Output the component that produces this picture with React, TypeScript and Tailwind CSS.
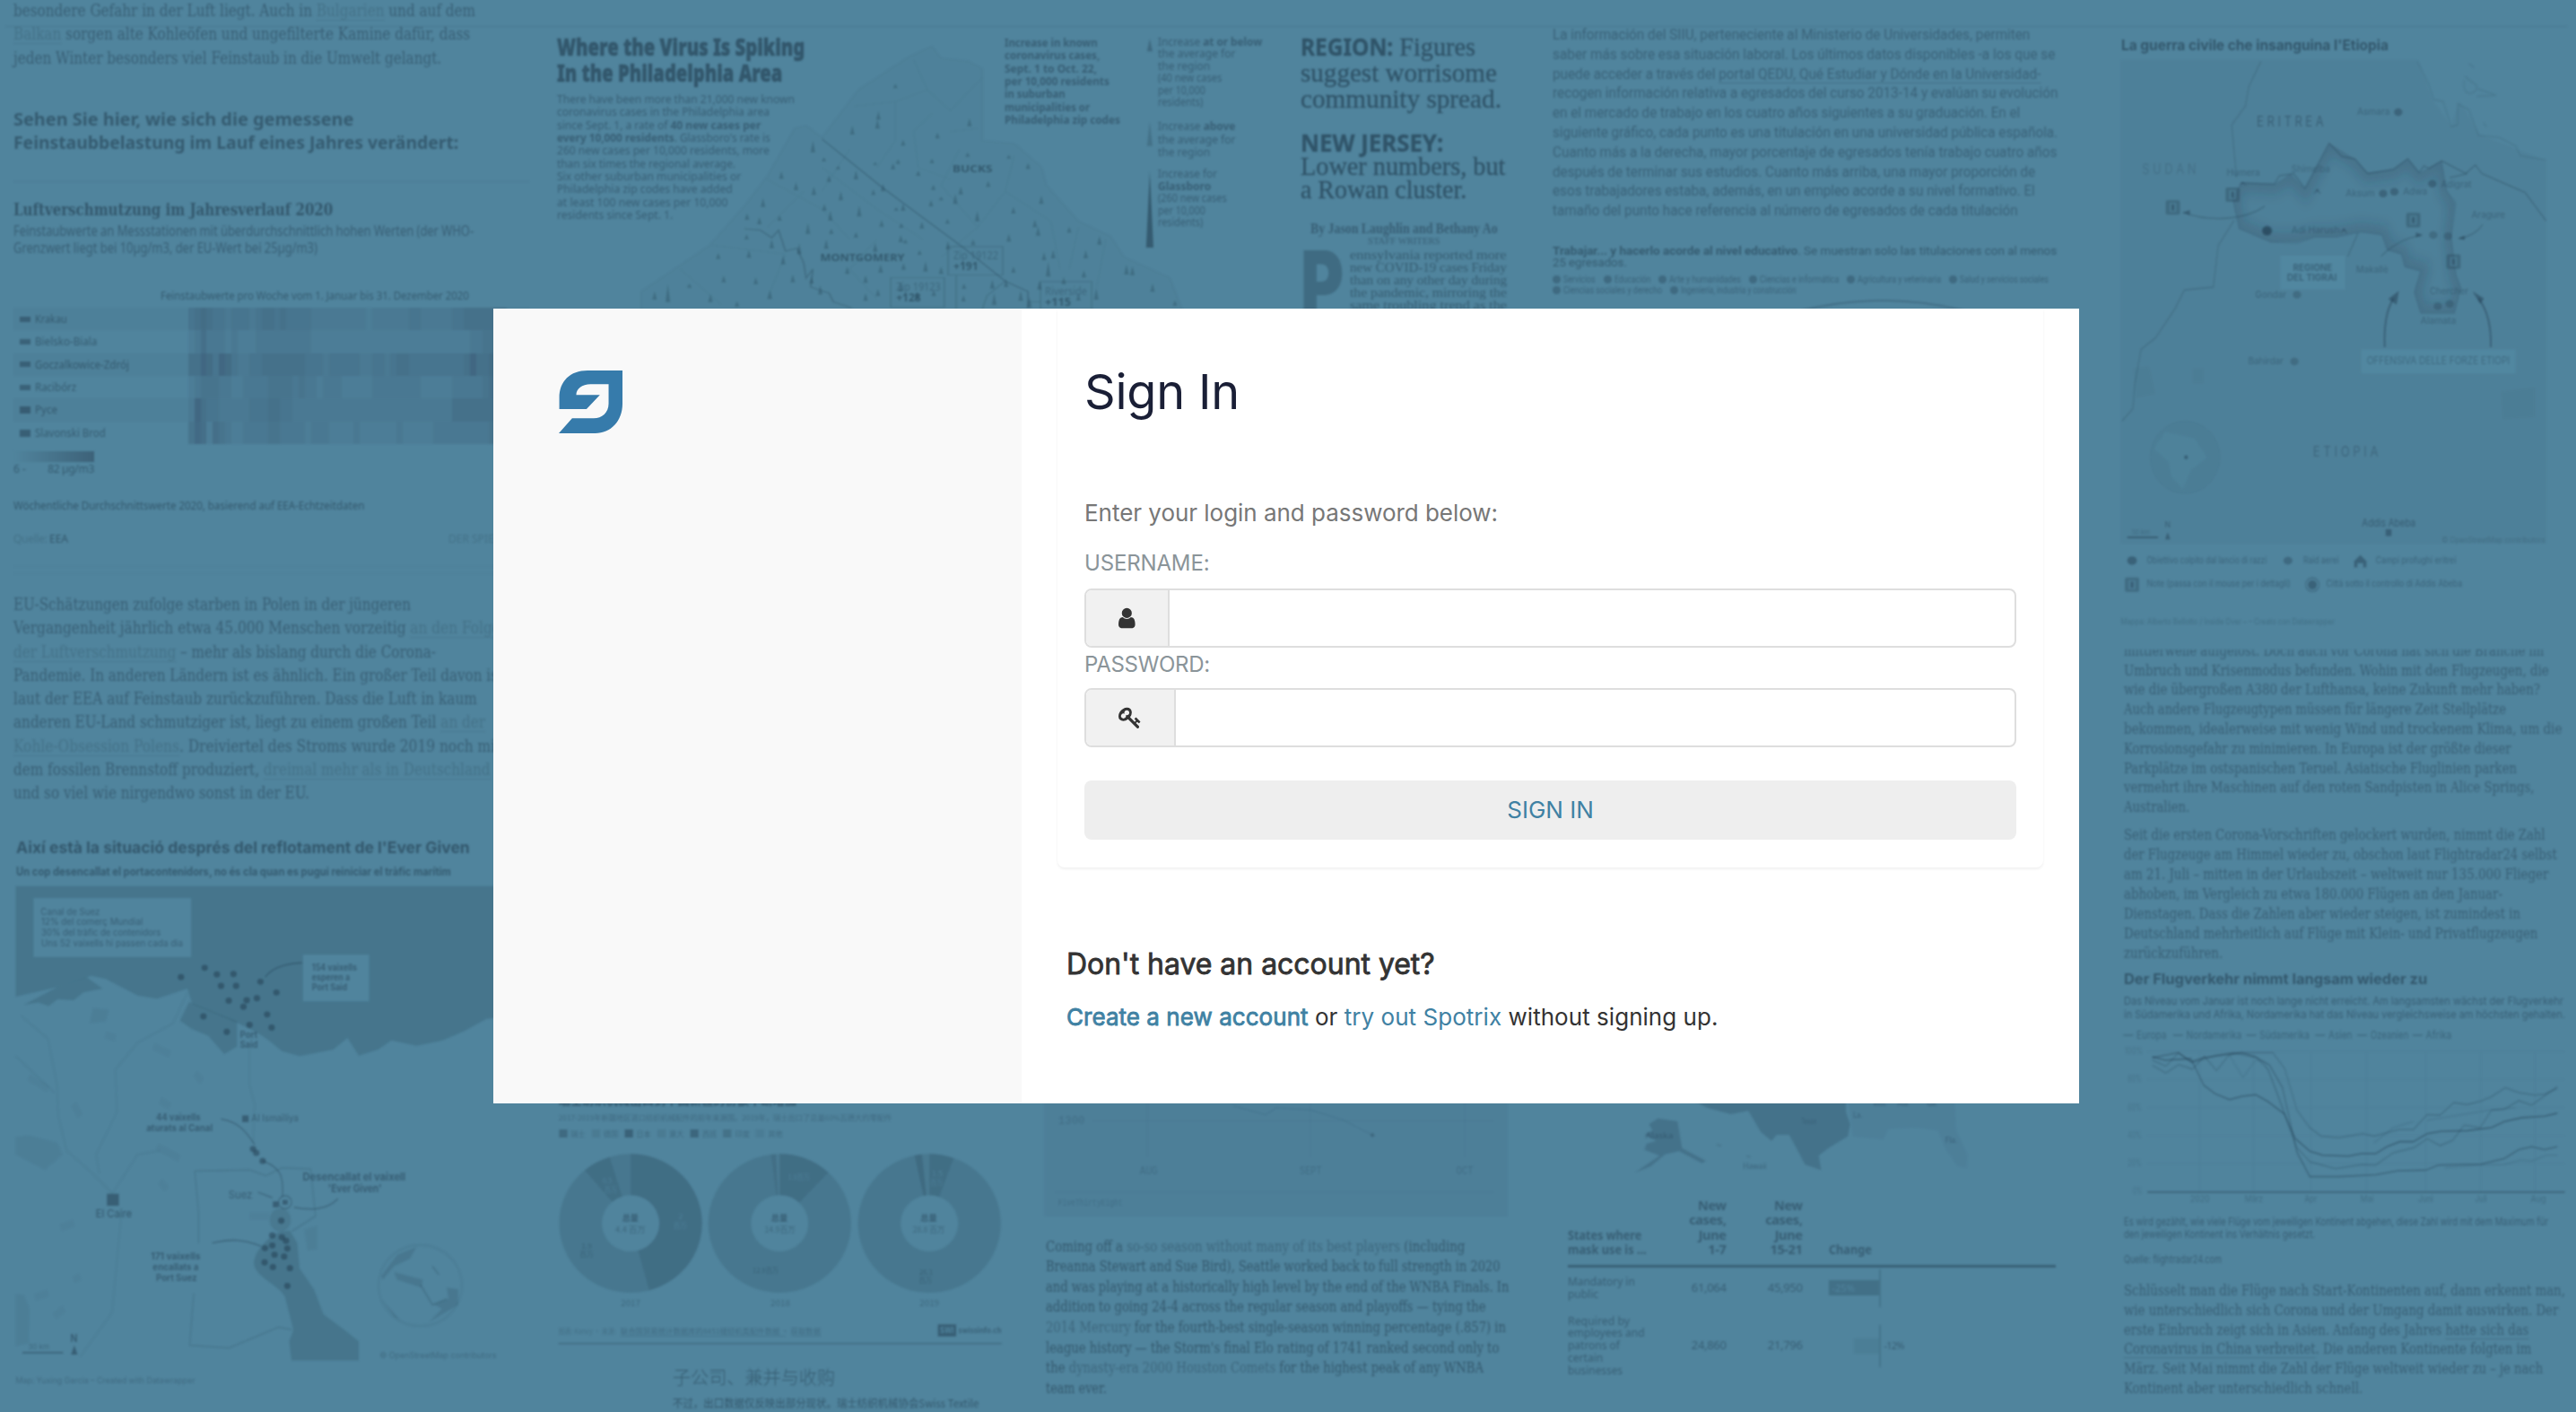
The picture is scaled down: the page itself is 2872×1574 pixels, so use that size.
import { useLayoutEffect, useRef, useState } from "react";
import type { ReactNode } from "react";

/* ---------- text helpers ---------- */

type Row = [number, ReactNode];

/** One line of print, condensed or expanded to a given measure. */
function Line({ w, children }: { w: number; children: ReactNode }) {
  const ref = useRef<HTMLDivElement>(null);
  const [scale, setScale] = useState(1);
  useLayoutEffect(() => {
    if (ref.current) setScale(w / ref.current.offsetWidth);
  }, [w]);
  return (
    <div ref={ref} className="w-max origin-left whitespace-nowrap" style={{ transform: `scaleX(${scale})` }}>
      {children}
    </div>
  );
}

function Lines({ rows, className }: { rows: Row[]; className: string }) {
  return (
    <div className={className}>
      {rows.map(([w, text], i) => (
        <Line key={i} w={w}>
          {text}
        </Line>
      ))}
    </div>
  );
}

const A = ({ children }: { children: ReactNode }) => (
  <span className="text-[#1f3a4d]/25 underline decoration-[#1f3a4d]/15 decoration-1 underline-offset-4">{children}</span>
);

/** Label inside a drawing, fitted to a length. */
function T({ x, y, w, s, b, o = 0.4, children }: { x: number; y: number; w: number; s: number; b?: boolean; o?: number; children: string }) {
  return (
    <text x={x} y={y} fontSize={s * 1.12} textLength={w} lengthAdjust="spacingAndGlyphs" fontWeight={b ? 700 : 400} fill="#1f3a4d" fillOpacity={o * 1.25} stroke="none">
      {children}
    </text>
  );
}

/* ---------- left column ---------- */

const cities: [string, number][] = [
  ["Krakau", 36],
  ["Bielsko-Biala", 69],
  ["Goczalkowice-Zdrój", 105],
  ["Racibórz", 46],
  ["Pyce", 25],
  ["Slavonski Brod", 79],
];

const heat = [
  "3454332333234434333322222222212222223322222334444444",
  "2353332322233333333322222222222222222222222222334465",
  "4465365322334444444333233333223323443333333334644555",
  "2344433223333444434332333222223333333322222333334566",
  "2643322222333443322222222222222222222222222444444432",
  "4652543223333443333233322223222222322222333333333433",
];

function LeftColumn() {
  return (
    <div className="flex h-full w-[590px] shrink-0 flex-col pl-[15px]">
      <Lines
        className="-mt-px font-['DejaVu_Serif',serif] text-[18px] leading-[26.3px] text-[#1f3a4d]/50"
        rows={[
          [515, <>besondere Gefahr in der Luft liegt. Auch in <A>Bulgarien</A> und auf dem</>],
          [509, <><A>Balkan</A> sorgen alte Kohleöfen und ungefilterte Kamine dafür, dass</>],
          [477, "jeden Winter besonders viel Feinstaub in die Umwelt gelangt."],
        ]}
      />
      <Lines
        className="mt-[42px] font-['Noto_Sans',sans-serif] text-[20px] leading-[26px] font-bold text-[#1f3a4d]/55"
        rows={[
          [379, "Sehen Sie hier, wie sich die gemessene"],
          [496, "Feinstaubbelastung im Lauf eines Jahres verändert:"],
        ]}
      />
      <div className="mt-[30px] h-px bg-[#1f3a4d]/10" />
      <Lines
        className="mt-[18px] font-['DejaVu_Serif',serif] text-[19px] leading-6 font-bold text-[#1f3a4d]/60"
        rows={[[356, "Luftverschmutzung im Jahresverlauf 2020"]]}
      />
      <Lines
        className="mt-[3px] font-['Noto_Sans',sans-serif] text-[15.5px] leading-[19px] text-[#1f3a4d]/50"
        rows={[
          [513, "Feinstaubwerte an Messstationen mit überdurchschnittlich hohen Werten (der WHO-"],
          [339, "Grenzwert liegt bei 10µg/m3, der EU-Wert bei 25µg/m3)"],
        ]}
      />
      <Lines
        className="mt-9 ml-[164px] font-['Noto_Sans',sans-serif] text-[12.5px] leading-4 text-[#1f3a4d]/55"
        rows={[[344, "Feinstaubwerte pro Woche vom 1. Januar bis 31. Dezember 2020"]]}
      />
      <div className="mt-[5px] flex flex-col font-['Noto_Sans',sans-serif] text-[13px] leading-[25.4px] text-[#1f3a4d]/55">
        {cities.map(([name, w], r) => (
          <div key={name} className={r % 2 ? "flex h-[25.4px] items-center" : "flex h-[25.4px] items-center bg-[#1f3a4d]/5"}>
            <div className={r > 3 ? "ml-[7px] h-[8px] w-3 shrink-0 bg-[#1f3a4d]/50" : "ml-[7px] h-[6px] w-3 shrink-0 bg-[#1f3a4d]/45"} />
            <div className="ml-[5px] w-[171px] shrink-0">
              <Line w={w}>{name}</Line>
            </div>
            <div className="flex h-full w-[355px]">
              {heat[r].split("").map((c, i) => (
                <div key={i} className="h-full flex-1 bg-[#2c3f5c]" style={{ opacity: (Number(c) - 0.6) * 0.068 }} />
              ))}
            </div>
          </div>
        ))}
      </div>
      <div className="mt-2 h-3 w-[90px] bg-linear-to-r from-[#50849d] to-[#3d6279]" />
      <div className="flex w-[90px] justify-between font-['Noto_Sans',sans-serif] text-[12px] leading-4 text-[#1f3a4d]/55">
        <span>6 -</span>
        <span className="tracking-tight">82 µg/m3</span>
      </div>
      <Lines
        className="mt-6 font-['Noto_Sans',sans-serif] text-[13px] leading-4 text-[#1f3a4d]/60"
        rows={[[391, "Wöchentliche Durchschnittswerte 2020, basierend auf EEA-Echtzeitdaten"]]}
      />
      <div className="mt-[22px] flex font-['Noto_Sans',sans-serif] text-[12px] leading-4 text-[#1f3a4d]/25">
        <span className="w-10 tracking-tight">Quelle:</span>
        <span className="text-[#1f3a4d]/60">EEA</span>
        <span className="ml-[424px] whitespace-nowrap">DER SPIEGEL</span>
      </div>
      <div className="mt-[22px] h-[9px] border-y border-[#1f3a4d]/5" />
      <Lines
        className="mt-[21px] h-[236px] shrink-0 font-['DejaVu_Serif',serif] text-[18px] leading-[26.25px] text-[#1f3a4d]/50"
        rows={[
          [443, "EU-Schätzungen zufolge starben in Polen in der jüngeren"],
          [553, <>Vergangenheit jährlich etwa 45.000 Menschen vorzeitig <A>an den Folgen</A></>],
          [471, <><A>der Luftverschmutzung</A> – mehr als bislang durch die Corona-</>],
          [546, "Pandemie. In anderen Ländern ist es ähnlich. Ein großer Teil davon ist"],
          [517, "laut der EEA auf Feinstaub zurückzuführen. Dass die Luft in kaum"],
          [526, <>anderen EU-Land schmutziger ist, liegt zu einem großen Teil <A>an der</A></>],
          [543, <><A>Kohle-Obsession Polens</A>. Dreiviertel des Stroms wurde 2019 noch mit</>],
          [532, <>dem fossilen Brennstoff produziert, <A>dreimal mehr als in Deutschland</A></>],
          [330, "und so viel wie nirgendwo sonst in der EU."],
        ]}
      />
      <Lines
        className="mt-9 ml-[2.5px] font-['Inter',sans-serif] text-[17.5px] leading-6 font-bold text-[#1f3a4d]/60"
        rows={[[506, "Així està la situació després del reflotament de l'Ever Given"]]}
      />
      <Lines
        className="mt-[7px] ml-[2.5px] font-['Inter',sans-serif] text-[12.5px] leading-4 font-bold text-[#1f3a4d]/55"
        rows={[[485, "Un cop desencallat el portacontenidors, no és cla quan es pugui reiniciar el tràfic marítim"]]}
      />
      <SuezMap />
    </div>
  );
}

const ships: [number, number][] = [
  [565, 440], [639, 416], [677, 433], [729, 432], [690, 463], [737, 463], [813, 452], [863, 480], [714, 501],
  [770, 500], [802, 495], [760, 517], [834, 537], [848, 571], [635, 542], [708, 582], [779, 564], [790, 886],
  [800, 896], [820, 917], [878, 1072], [850, 1110], [880, 1115], [893, 1124], [850, 1136], [827, 1143], [897, 1144],
  [857, 1160], [887, 1165], [826, 1180], [852, 1192], [905, 1195], [897, 1241],
];

function SuezMap() {
  return (
    <svg viewBox="0 200 1568 1368" preserveAspectRatio="none" className="mt-1.5 -ml-[15px] h-[588px] w-[560px] shrink-0" fontFamily="Inter" fill="none">
      <path
        d="M49 204H1568V545L1520 548L1450 580L1380 605L1300 618L1222 604L1180 628L1120 644L1085 598L1040 628L935 645L880 632L840 605L805 585L745 560L600 510L585 470L490 496L430 488L330 445L285 437L180 466L49 491Z"
        fill="#1f3a4d" fillOpacity="0.2"
      />
      <path d="M75 512L180 466L270 440L320 470L260 480L230 500L180 497L152 515L120 506Z M590 505L740 555L740 620L700 640L650 592L600 575L562 553Z" fill="#1f3a4d" fillOpacity="0.2" />
      <path d="M878 1100C850 1105 790 1150 793 1185C800 1220 875 1240 890 1270L916 1355L903 1385L910 1434H1120V1385L1075 1355L1010 1315L980 1250L935 1195L928 1130L905 1098Z" fill="#1f3a4d" fillOpacity="0.2" />
      <path d="M49 855L90 850L180 870L195 900L140 940L49 900Z M49 1262L75 1265L92 1300L90 1390L49 1397Z M950 1095L990 1085V1145L960 1150Z M290 520L340 525L330 555L280 560Z" fill="#1f3a4d" fillOpacity="0.07" />
      <ellipse cx="875" cy="1070" rx="33" ry="30" fill="#1f3a4d" fillOpacity="0.15" />
      <ellipse cx="890" cy="1024" rx="20" ry="17" stroke="#1f3a4d" strokeOpacity="0.4" strokeWidth="3" />
      <g stroke="#1f3a4d" strokeOpacity="0.08" strokeWidth="4">
        <path d="M65 540L150 600L178 720L182 800L208 890L290 950L352 1002M585 480L540 560L430 610L360 680L365 790L300 900L310 950M350 1002L430 900L500 890M378 1060L350 1310L250 1425M49 645L170 740M779 625V720L795 770L790 870" />
        <path d="M90 700l60 30M230 770l20 30M330 590l30 8M480 620l50 20M610 690l20 20M500 760l30 15M490 880l70 30M500 970l20 20M190 1090l40-12M110 1270l40-10M170 1320l30-20M230 1225l20-8M780 1060h60" strokeWidth="18" strokeOpacity="0.05" />
      </g>
      <g stroke="#1f3a4d" strokeOpacity="0.2" strokeWidth="3">
        <path d="M608 943L780 940L830 955L880 935L970 938L985 1060L910 1100M608 943L620 1050V1130M605 1260L592 1395L715 1402L870 1348L912 1355" />
      </g>
      <g stroke="#1f3a4d" strokeOpacity="0.42" strokeWidth="3">
        <path d="M690 808C740 815 765 835 795 875M820 917C880 935 885 960 882 1010M663 1130C720 1118 760 1120 815 1138M1055 1015C1020 1045 970 1045 918 1037M943 403C890 405 850 415 828 440M805 998L850 1012" />
        <path d="M70 1414H197" strokeWidth="4" />
      </g>
      <rect x="105" y="235" width="492" height="153" fill="#50849d" />
      <rect x="946" y="382" width="206" height="121" fill="#50849d" />
      <g fill="#1f3a4d" fillOpacity="0.5">
        {ships.map(([x, y], i) => (
          <ellipse key={i} cx={x} cy={y} rx="10" ry="8" />
        ))}
        <rect x="334" y="1002" width="37" height="31" />
        <rect x="756" y="799" width="20" height="17" />
        <rect x="852" y="1022" width="18" height="15" />
        <rect x="882" y="1018" width="16" height="12" />
        <path d="M232 1395l10 24h-20z" />
      </g>
      <T x={127} y={278} w={185} s={21}>Canal de Suez</T>
      <T x={129} y={305} w={317} s={21}>12% del comerç Mundial</T>
      <T x={129} y={333} w={373} s={21}>30% del tràfic de contenidors</T>
      <T x={129} y={361} w={442} s={21}>Uns 52 vaixells hi passen cada dia</T>
      <T x={974} y={423} w={140} s={21} b>154 vaixells</T>
      <T x={974} y={449} w={118} s={21} b>esperen a</T>
      <T x={974} y={475} w={110} s={21} b>Port Said</T>
      <T x={749} y={597} w={55} s={22} b>Port</T>
      <T x={749} y={624} w={56} s={22} b>Said</T>
      <T x={487} y={811} w={139} s={22} b>44 vaixells</T>
      <T x={457} y={839} w={207} s={22} b>aturats al Canal</T>
      <T x={785} y={814} w={147} s={22}>Al Ismaïliya</T>
      <T x={945} y={968} w={321} s={24} b>Desencallat el vaixell</T>
      <T x={1024} y={999} w={167} s={24} b>'Ever Given'</T>
      <T x={713} y={1014} w={75} s={24}>Suez</T>
      <T x={299} y={1062} w={113} s={25} o={0.5}>El Caire</T>
      <T x={471} y={1173} w={155} s={22} b>171 vaixells</T>
      <T x={477} y={1201} w={143} s={22} b>encallats a</T>
      <T x={487} y={1228} w={128} s={22} b>Port Suez</T>
      <T x={220} y={1386} w={22} s={24} b>N</T>
      <T x={88} y={1405} w={66} s={17} o={0.3}>30 km</T>
      <T x={1185} y={1429} w={365} s={19} o={0.28}>© OpenStreetMap contributors</T>
      <T x={49} y={1493} w={560} s={19} o={0.28}>Map: Yuxing Garcia – Created with Datawrapper</T>
      <ellipse cx="1312" cy="1240" rx="130" ry="105" stroke="#1f3a4d" strokeOpacity="0.07" strokeWidth="6" />
      <path d="M1190 1215L1240 1160L1300 1140L1280 1170L1230 1190L1195 1225ZM1230 1205L1320 1225L1315 1245L1240 1225ZM1355 1290L1400 1275L1395 1245L1430 1250L1430 1290L1340 1335L1380 1300ZM1190 1275L1250 1330L1230 1320Z" fill="#1f3a4d" fillOpacity="0.16" />
      <path d="M1313 1238L1350 1290L1395 1275M1350 1190l20 22" stroke="#1f3a4d" strokeOpacity="0.25" strokeWidth="4" />
    </svg>
  );
}

/* ---------- top of the middle ---------- */

const spikes: [number, number, number][] = [
  [800, 295, 15], [763, 400, 27], [706, 450, 30], [761, 430, 30], [962, 422, 26], [892, 463, 20], [817, 487, 20], [958, 524, 15],
  [1048, 530, 12], [1090, 565, 20], [620, 510, 40], [644, 540, 14], [675, 566, 12], [756, 552, 10], [795, 566, 20], [806, 548, 16],
  [880, 546, 16], [850, 588, 18], [714, 600, 30], [655, 608, 22], [551, 598, 25], [583, 636, 26], [622, 652, 28], [681, 670, 30],
  [752, 652, 18], [773, 640, 26], [883, 635, 18], [943, 650, 26], [931, 682, 34], [1003, 625, 20], [1119, 682, 28], [511, 692, 30],
  [645, 705, 24], [658, 738, 34], [721, 724, 36], [802, 705, 12], [817, 705, 24], [878, 690, 22], [900, 670, 12], [1058, 714, 22],
  [979, 740, 34], [476, 735, 22], [503, 750, 24], [547, 738, 18], [609, 782, 36], [660, 782, 18], [714, 794, 18], [770, 758, 22],
  [813, 762, 16], [858, 764, 22], [914, 748, 16], [1105, 760, 26], [1112, 788, 30], [1180, 778, 20], [1048, 808, 26], [1246, 818, 28],
  [475, 800, 16], [530, 830, 30], [590, 850, 36], [649, 832, 32], [756, 842, 30], [812, 810, 24], [822, 814, 14], [915, 834, 28],
  [970, 820, 20], [1145, 864, 28], [1125, 870, 26], [1216, 864, 28], [413, 866, 20], [480, 862, 26], [555, 884, 30], [853, 852, 16],
  [695, 916, 24], [768, 912, 28], [818, 902, 22], [866, 908, 34], [900, 916, 24], [1058, 912, 20], [1134, 925, 50], [1212, 928, 24],
  [1305, 918, 34], [1318, 920, 30], [425, 944, 22], [495, 950, 22], [350, 962, 14], [576, 944, 26], [617, 948, 22], [735, 946, 26],
  [1168, 950, 24], [1115, 968, 30], [1362, 976, 28], [274, 1002, 28], [303, 1010, 60], [396, 1010, 26], [454, 1025, 18], [526, 1000, 30],
  [636, 985, 30], [735, 1006, 26], [762, 990, 24], [812, 975, 32], [847, 1000, 26], [884, 990, 20], [950, 966, 18], [1012, 965, 30],
  [1042, 960, 26], [1239, 1002, 38], [1200, 1005, 24], [949, 1008, 20], [1016, 1020, 40], [1074, 1006, 34], [1093, 1028, 34], [1411, 1022, 18],
];

function Philadelphia() {
  return (
    <div className="relative flex w-[821px] shrink-0 pl-[30.6px] font-['Noto_Sans',sans-serif] text-[13px] leading-[14.33px] text-[#1f3a4d]/50">
      <svg viewBox="0 0 1609 1050" preserveAspectRatio="none" className="absolute top-0 left-0 h-[350px] w-[821px]" fontFamily="Noto Sans" fill="none">
        <path d="M245 1050V975L395 820L470 690L520 590L580 430L605 420L640 460L720 300L830 190L880 155L900 195L960 205L990 230V470L1060 480L1120 560L1130 620L1200 740L1270 790L1300 860L1400 930L1430 1050Z" fill="#1f3a4d" fillOpacity="0.03" stroke="#1f3a4d" strokeOpacity="0.05" strokeWidth="4" />
        <g stroke="#1f3a4d" strokeOpacity="0.08" strokeWidth="2">
          <path d="M710 355L800 340L870 300L840 200M870 300L920 370L990 260M920 440L980 430M800 340V470L760 560M880 380L840 440L850 560L920 600M520 600L640 700L700 800M640 560L760 700L860 800M400 820L560 850M600 640L520 760M700 500L640 640M940 500L900 620L980 760M1060 520L1040 640L1140 740M980 760L900 860M1140 740L1160 900M1200 760L1180 900M1040 640L980 760M760 800L700 900L760 1000M560 850L520 1000M1260 800L1240 960M330 900L420 1020" />
        </g>
        <path d="M640 465L770 625L950 830L1040 940L1090 975V1030" stroke="#1f3a4d" strokeOpacity="0.35" strokeWidth="3" />
        <path d="M470 765L505 770L530 795L545 770L560 840L585 830L600 880L605 930L620 900L615 960L655 980L665 1010L705 1030" stroke="#1f3a4d" strokeOpacity="0.28" strokeWidth="3.5" />
        <path d="M915 825H1035V920H915ZM790 928H907V1028H790ZM1117 942H1229V1035H1117ZM933 920V1035M1040 940L1000 990L990 1035M1090 1010H1117" stroke="#1f3a4d" strokeOpacity="0.25" strokeWidth="2.5" />
        <g fill="#1f3a4d" fillOpacity="0.3">
          {spikes.map(([x, y, h], i) => (
            <path key={i} d={`M${x} ${y - h}L${x + 5} ${y}H${x - 5}Z`} />
          ))}
          <path d="M1356 130L1362 172H1350Z" fillOpacity="0.35" />
          <path d="M1356 408L1362 488H1350Z" fillOpacity="0.25" />
          <path d="M1356 572L1364 828H1348Z" fillOpacity="0.55" />
        </g>
        <T x={925} y={576} w={87} s={30} b o={0.45}>BUCKS</T>
        <T x={636} y={872} w={184} s={30} b o={0.45}>MONTGOMERY</T>
        <T x={927} y={866} w={98} s={33} o={0.28}>Zip 19122</T>
        <T x={927} y={903} w={54} s={33} b o={0.45}>+191</T>
        <T x={802} y={972} w={97} s={33} o={0.28}>Zip 19123</T>
        <T x={802} y={1008} w={54} s={33} b o={0.45}>+128</T>
        <T x={1127} y={987} w={92} s={33} o={0.28}>Riverside</T>
        <T x={1127} y={1022} w={57} s={33} b o={0.45}>+115</T>
      </svg>
      <div className="relative mt-[37px] w-[270px] shrink-0">
        <Lines
          className="text-[27px] leading-[29px] font-black text-[#1f3a4d]/60 [-webkit-text-stroke:0.6px_rgb(31_58_77/0.45)]"
          rows={[
            [276.5, "Where the Virus Is Spiking"],
            [251.5, "In the Philadelphia Area"],
          ]}
        />
        <Lines
          className="mt-2"
          rows={[
            [265, "There have been more than 21,000 new known"],
            [237, "coronavirus cases in the Philadelphia area"],
            [227, <>since Sept. 1, a rate of <b>40 new cases per</b></>],
            [238, <><b>every 10,000 residents</b>. Glassboro's rate is</>],
            [237, "260 new cases per 10,000 residents, more"],
            [199, "than six times the regional average."],
            [205, "Six other suburban municipalities or"],
            [196, "Philadelphia zip codes have added"],
            [190, "at least 100 new cases per 10,000"],
            [129, "residents since Sept. 1."],
          ]}
        />
      </div>
      <Lines
        className="relative mt-10 ml-[229px] w-[130px] shrink-0 font-bold"
        rows={[
          [104, "Increase in known"],
          [106, "coronavirus cases,"],
          [103, "Sept. 1 to Oct. 22,"],
          [117, "per 10,000 residents"],
          [68, "in suburban"],
          [95, "municipalities or"],
          [129, "Philadelphia zip codes"],
        ]}
      />
      <div className="relative mt-10 ml-[41.5px] w-[119px] shrink-0">
        <Lines
          className="leading-[13.4px]"
          rows={[
            [116, <>Increase <b>at or below</b></>],
            [86, "the average for"],
            [58, "the region"],
            [71, "(40 new cases"],
            [53, "per 10,000"],
            [50, "residents)"],
          ]}
        />
        <Lines
          className="mt-[13px]"
          rows={[
            [86, <>Increase <b>above</b></>],
            [86, "the average for"],
            [58, "the region"],
          ]}
        />
        <Lines
          className="mt-[11px] leading-[13.5px]"
          rows={[
            [66, "Increase for"],
            [59, <b>Glassboro</b>],
            [77, "(260 new cases"],
            [53, "per 10,000"],
            [50, "residents)"],
          ]}
        />
      </div>
    </div>
  );
}

function Region() {
  return (
    <div className="ml-[38.5px] w-[231px] shrink-0 pt-[37px] font-['Liberation_Serif',serif] text-[#1f3a4d]/65">
      <Lines
        className="text-[30px] leading-[29px] [-webkit-text-stroke:0.4px_rgb(31_58_77/0.4)]"
        rows={[
          [195, <><b className="font-['Noto_Sans',sans-serif] text-[26px] leading-none">REGION:</b> Figures</>],
          [219, "suggest worrisome"],
          [224, "community spread."],
        ]}
      />
      <Lines
        className="mt-[22px] text-[30px] leading-[25.5px] [-webkit-text-stroke:0.4px_rgb(31_58_77/0.4)]"
        rows={[
          [159, <b className="font-['Noto_Sans',sans-serif] text-[26px] leading-none">NEW JERSEY:</b>],
          [228, "Lower numbers, but"],
          [185, "a Rowan cluster."],
        ]}
      />
      <Lines className="mt-[23px] ml-[11px] text-[17px] leading-[18px] font-bold text-[#1f3a4d]/50" rows={[[209, "By Jason Laughlin and Bethany Ao"]]} />
      <Lines className="ml-[75px] text-[10px] leading-[10px] text-[#1f3a4d]/50" rows={[[80, "STAFF WRITERS"]]} />
      <div className="mt-[3px] flex">
        <div className="w-[55.5px] shrink-0 font-['Inter',sans-serif] text-[98px] leading-[76px] font-black text-[#1f3a4d]/33">
          <Line w={48}>P</Line>
        </div>
        <Lines
          className="text-[14.5px] leading-[14px] text-[#1f3a4d]/55"
          rows={[
            [175, "ennsylvania reported more"],
            [175, "new COVID-19 cases Friday"],
            [175, "than on any other day during"],
            [175, "the pandemic, mirroring the"],
            [175, "same troubling trend as the"],
          ]}
        />
      </div>
    </div>
  );
}

const fields: [number, string][][] = [
  [[57, "Servicios"], [61, "Educación"], [101, "Arte y humanidades"], [109, "Ciencias e informática"], [114, "Agricultura y veterinaria"], [120, "Salud y servicios sociales"]],
  [[131, "Ciencias sociales y derecho"], [150, "Ingeniería, industria y construcción"]],
];

function Universities() {
  return (
    <div className="ml-[50px] w-[579px] shrink-0 pt-7 font-['Roboto',sans-serif] text-[#1f3a4d]/45">
      <Lines
        className="text-[17px] leading-[21.8px]"
        rows={[
          [532, "La información del SIIU, perteneciente al Ministerio de Universidades, permiten"],
          [560.5, "saber más sobre esa situación laboral. Los últimos datos disponibles -a los que se"],
          [544, <>puede acceder a través del <span className="underline decoration-[#1f3a4d]/25 underline-offset-4">portal QEDU, Qué Estudiar y Dónde en la Universidad-</span></>],
          [563, "recogen información relativa a egresados del curso 2013-14 y evalúan su evolución"],
          [521.5, "en el mercado de trabajo en los cuatro años siguientes a su graduación. En el"],
          [563, "siguiente gráfico, cada punto es una titulación en una universidad pública española."],
          [562, "Cuanto más a la derecha, mayor porcentaje de egresados tenía trabajo cuatro años"],
          [538, "después de terminar sus estudios. Cuanto más arriba, una mayor proporción de"],
          [538, "esos trabajadores estaba, además, en un empleo acorde a su nivel formativo. El"],
          [519, "tamaño del punto hace referencia al número de egresados de cada titulación"],
        ]}
      />
      <Lines
        className="mt-[27px] text-[13px] leading-[13px] text-[#1f3a4d]/55"
        rows={[
          [562, <><b>Trabajar... y hacerlo acorde al nivel educativo</b>. Se muestran solo las titulaciones con al menos</>],
          [83, "25 egresados."],
        ]}
      />
      <div className="mt-[7px] text-[10px] leading-3">
        {fields.map((row, r) => (
          <div key={r} className="flex">
            {row.map(([w, label]) => (
              <div key={label} className="flex items-center" style={{ width: w }}>
                <div className="mr-[3px] size-[9px] shrink-0 rounded-full bg-[#1f3a4d]/35" />
                <Line w={w - 21}>{label}</Line>
              </div>
            ))}
          </div>
        ))}
      </div>
      <svg viewBox="0 0 180 12" className="mt-[4px] ml-[278px] h-3 w-[180px]">
        <path d="M0 12Q90 -10 180 12" fill="none" stroke="#1f3a4d" strokeOpacity="0.35" strokeWidth="1.5" />
      </svg>
    </div>
  );
}

/* ---------- bottom of the middle ---------- */

const at = (cx: number, rx: number, ry: number, deg: number) => {
  const a = (deg * Math.PI) / 180;
  return `${(cx + rx * Math.sin(a)).toFixed(1)} ${(431 - ry * Math.cos(a)).toFixed(1)}`;
};

function Slice({ cx, from, to, o }: { cx: number; from: number; to: number; o: number }) {
  const big = to - from > 180 ? 1 : 0;
  return (
    <path
      d={`M${at(cx, 219, 232, from)}A219 232 0 ${big} 1 ${at(cx, 219, 232, to)}L${at(cx, 88, 94, to)}A88 94 0 ${big} 0 ${at(cx, 88, 94, from)}Z`}
      fill="#1f3a4d"
      fillOpacity={o}
    />
  );
}

function Donuts() {
  return (
    <div className="w-[540px] shrink-0">
      <svg viewBox="0 0 1485 860" preserveAspectRatio="none" className="h-[286.7px] w-[540px]" fontFamily="Noto Sans CJK SC">
        <T x={90} y={36} w={730} s={32} b o={0.5}>瑞士纺织机械出口到中国新疆的份额不断增加</T>
        <T x={90} y={88} w={1022} s={21} o={0.28}>2017-2019年新疆地区进口纺织机械配件的前年来源国。2019年，瑞士出口了总量60%瓦德大约零配件</T>
        {["瑞士", "德国", "日本", "意大", "西班", "印度", "其他"].map((t, i) => (
          <g key={t}>
            <rect x={92 + i * 100.5} y={117} width={25} height={27} fill="#1f3a4d" fillOpacity={[0.35, 0.12, 0.45, 0.12, 0.4, 0.25, 0.1][i]} />
            <T x={127 + i * 101} y={140} w={44} s={22} o={0.3}>{t}</T>
          </g>
        ))}
        <Slice cx={311} from={0} to={165} o={0.3} />
        <Slice cx={311} from={165} to={320} o={0.17} />
        <Slice cx={311} from={320} to={343} o={0.3} />
        <Slice cx={311} from={343} to={360} o={0.17} />
        <Slice cx={768} from={0} to={43} o={0.3} />
        <Slice cx={768} from={43} to={353} o={0.17} />
        <Slice cx={768} from={353} to={357} o={0.28} />
        <Slice cx={768} from={357} to={360} o={0.12} />
        <Slice cx={1227} from={0} to={20} o={0.3} />
        <Slice cx={1227} from={20} to={348} o={0.17} />
        <Slice cx={1227} from={348} to={354} o={0.34} />
        <Slice cx={1227} from={354} to={360} o={0.15} />
        <T x={285} y={422} w={50} s={24} b o={0.4}>总量</T>
        <T x={264} y={462} w={92} s={24} o={0.3}>4.4 百万</T>
        <T x={742} y={422} w={50} s={24} b o={0.4}>总量</T>
        <T x={722} y={462} w={94} s={24} o={0.3}>14.9百万</T>
        <T x={1200} y={422} w={50} s={24} b o={0.4}>总量</T>
        <T x={1176} y={462} w={98} s={24} o={0.3}>28.8 百万</T>
        <T x={160} y={517} w={32} s={22} o={0.3}>1.9</T>
        <T x={155} y={544} w={42} s={22} o={0.3}>百万</T>
        <T x={685} y={598} w={80} s={22} o={0.3}>12.9百万</T>
        <T x={1196} y={602} w={42} s={22} o={0.3}>26.1</T>
        <T x={1194} y={630} w={42} s={22} o={0.3}>百万</T>
        <g fill="#50849d" fontSize="24" opacity="0.8">
          <text x="458" y="418" textLength="10">2</text>
          <text x="442" y="446" textLength="42" lengthAdjust="spacingAndGlyphs">百万</text>
          <text x="224" y="297" textLength="30">0.3</text>
          <text x="230" y="326" textLength="40" lengthAdjust="spacingAndGlyphs">百万</text>
          <text x="794" y="286" textLength="66" lengthAdjust="spacingAndGlyphs">1.9百万</text>
          <text x="1234" y="274" textLength="34">1.5</text>
          <text x="1230" y="303" textLength="38" lengthAdjust="spacingAndGlyphs">百万</text>
        </g>
        <T x={281} y={709} w={60} s={24} o={0.3}>2017</T>
        <T x={740} y={709} w={60} s={24} o={0.3}>2018</T>
        <T x={1197} y={709} w={60} s={24} o={0.3}>2019</T>
        <T x={90} y={802} w={176} s={22} o={0.22}>图表: Kaney · 来源:</T>
        <T x={280} y={802} w={614} s={22} o={0.28}>联合国贸易统计数据库的8451缝纫机类配件数据 · 获取数据</T>
        <path d="M280 808H785M805 808H894" stroke="#1f3a4d" strokeOpacity="0.25" strokeWidth="2" />
        <rect x="1253" y="769" width="56" height="40" fill="#1f3a4d" fillOpacity="0.5" />
        <text x="1259" y="799" fontSize="28" fontWeight="700" textLength="44" lengthAdjust="spacingAndGlyphs" fill="#50849d">SWI</text>
        <T x={1316} y={798} w={132} s={22} b o={0.38}>swissinfo.ch</T>
        <path d="M90 833H1448" stroke="#1f3a4d" strokeOpacity="0.38" strokeWidth="3.5" />
      </svg>
      <Lines className="mt-[14px] ml-[160px] font-['Noto_Sans_CJK_SC',sans-serif] text-[20px] leading-7 font-light text-[#1f3a4d]/55" rows={[[181, "子公司、兼并与收购"]]} />
      <Lines
        className="mt-[7px] ml-[160px] font-['Noto_Sans_CJK_SC',sans-serif] text-[12px] leading-4 font-normal text-[#1f3a4d]/60"
        rows={[[341, "不过，出口数据仅反映出部分现状。瑞士纺织机械协会Swiss Textile"]]}
      />
    </div>
  );
}

function Storm() {
  return (
    <div className="w-[580px] shrink-0">
      <svg viewBox="0 0 1516 410" preserveAspectRatio="none" className="h-[136.7px] w-[580px]" fontFamily="Liberation Mono" fill="none">
        <path d="M90 0H1440V408H90Z" fill="#1f3a4d" fillOpacity="0.06" />
        <path d="M390 0V210M865 0V210M1315 0V210M230 88H1400M120 327H1400" stroke="#1f3a4d" strokeOpacity="0.07" strokeWidth="2.5" />
        <path d="M640 38L735 68L765 45L865 52L960 85L1046 136" stroke="#1f3a4d" strokeOpacity="0.14" strokeWidth="3" />
        <ellipse cx="1046" cy="136" rx="6" ry="7" fill="#1f3a4d" fillOpacity="0.28" />
        <T x={130} y={100} w={78} s={34} o={0.2}>1300</T>
        <T x={368} y={266} w={52} s={32} o={0.2}>AUG</T>
        <T x={834} y={266} w={64} s={32} o={0.2}>SEPT</T>
        <T x={1290} y={266} w={50} s={32} o={0.2}>OCT</T>
        <T x={130} y={371} w={188} s={28} o={0.2}>FiveThirtyEight</T>
      </svg>
      <Lines
        className="mt-[22px] ml-9 font-['DejaVu_Serif',serif] text-[16px] leading-[22.6px] text-[#1f3a4d]/60"
        rows={[
          [467.7, <>Coming off a <span className="opacity-65">so-so season without many of its best players</span> (including</>],
          [506.7, "Breanna Stewart and Sue Bird), Seattle worked back to full strength in 2020"],
          [516, "and was playing at a historically high level by the end of the WNBA Finals. In"],
          [491, "addition to going 24-4 across the regular season and playoffs — tying the"],
          [513, <><span className="opacity-65">2014 Mercury</span> for the fourth-best single-season winning percentage (.857) in</>],
          [505.5, "league history — the Storm's final Elo rating of 1741 ranked second only to"],
          [488, <>the <span className="opacity-65">dynasty-era 2000 Houston Comets</span> for the highest peak of any WNBA</>],
          [68, "team ever."],
        ]}
      />
    </div>
  );
}

function Masks() {
  return (
    <div className="w-[600px] shrink-0 font-['Noto_Sans',sans-serif] text-[#1f3a4d]/50">
      <svg viewBox="0 0 1517 300" preserveAspectRatio="none" className="h-[100px] w-[600px]" fontFamily="Noto Sans">
        <g fill="#1f3a4d" fillOpacity="0.23">
          <path d="M450 20L490 45L555 66L605 55L640 125L670 155L685 135H720L745 190L765 235L810 253L803 205L830 180L885 140L892 100L880 60V0H450Z" />
          <path d="M325 100L350 80L405 90L418 180L485 222L475 230L410 190L370 200L330 240L285 262L355 205L312 185L318 165L345 155L312 135L335 120Z" />
        </g>
        <path d="M885 0H1185L1190 120L1222 200L1220 245L1195 240L1160 180L1140 120L1080 110L1000 115L985 150L900 140Z" fill="#1f3a4d" fillOpacity="0.06" />
        <path d="M515 168l14 4M600 205l10 5" stroke="#1f3a4d" strokeOpacity="0.15" strokeWidth="6" />
        <T x={315} y={148} w={78} s={22} o={0.35}>Alaska</T>
        <T x={590} y={249} w={66} s={22} o={0.35}>Hawaii</T>
        <T x={755} y={100} w={42} s={22} o={0.25}>Texas</T>
        <T x={900} y={78} w={26} s={22} o={0.35}>La.</T>
        <T x={1160} y={162} w={34} s={22} o={0.35}>Fla.</T>
        <T x={957} y={38} w={38} s={22} o={0.35}>Miss.</T>
        <T x={1025} y={38} w={34} s={22} o={0.35}>Ala.</T>
        <T x={1108} y={38} w={30} s={22} o={0.35}>Ga.</T>
      </svg>
      <div className="mt-[15px] ml-[37.5px] w-[544px] text-[13px] leading-[13.8px]">
        <div className="grid grid-cols-[100px_77px_85px_29px_1fr] items-end text-[14.5px] leading-[16.4px] font-bold">
          <Lines className="" rows={[[82, "States where"], [88, "mask use is ..."]]} />
          <div className="text-right tracking-tight">New<br />cases,<br />June<br />1-7</div>
          <div className="text-right tracking-tight">New<br />cases,<br />June<br />15-21</div>
          <div />
          <Lines className="" rows={[[48, "Change"]]} />
        </div>
        <div className="mt-[9px] h-[3px] bg-[#1f3a4d]/45" />
        <div className="mt-[2px] grid h-[42px] grid-cols-[100px_77px_85px_29px_1fr] items-center">
          <Lines className="" rows={[[75, "Mandatory in"], [34, "public"]]} />
          <div className="text-right tracking-tight">61,064</div>
          <div className="text-right tracking-tight">45,950</div>
          <div />
          <div className="flex h-full w-[58px] items-center border-r-2 border-[#1f3a4d]/20">
            <div className="h-[17px] w-full bg-[#1f3a4d]/27 pl-1 text-[11px] leading-[17px] text-[#50849d]">-25%</div>
          </div>
        </div>
        <div className="mt-[9px] grid h-[69px] grid-cols-[100px_77px_85px_29px_1fr] items-center">
          <Lines className="" rows={[[69, "Required by"], [86, "employees and"], [58, "patrons of"], [39, "certain"], [61, "businesses"]]} />
          <div className="text-right tracking-tight">24,860</div>
          <div className="text-right tracking-tight">21,796</div>
          <div />
          <div className="flex items-center text-[11px]">
            <div className="flex h-[47px] w-[58px] items-center justify-end border-r-2 border-[#1f3a4d]/20">
              <div className="h-[17px] w-7 bg-[#1f3a4d]/8" />
            </div>
            <span className="ml-1 -tracking-[0.8px]">-12%</span>
          </div>
        </div>
      </div>
    </div>
  );
}

/* ---------- right column ---------- */

function EthiopiaMap() {
  const towns: [number, number][] = [[1015, 265], [968, 457], [1003, 453], [1121, 434], [607, 545], [1124, 555], [1170, 558], [700, 696], [692, 854], [1138, 723], [1175, 718]];
  const notes: [number, number][] = [[314, 490], [500, 460], [1062, 520], [1187, 618], [187, 1381]];
  return (
    <svg viewBox="0 140 1568 1360" preserveAspectRatio="none" className="mt-1.5 h-[642px] w-[562px] shrink-0" fontFamily="Inter" fill="none">
      <defs>
        <filter id="soft" x="-10%" y="-10%" width="120%" height="120%">
          <feGaussianBlur stdDeviation="14" />
        </filter>
        <clipPath id="tigray">
          <path d="M500 470L525 430L630 435L680 410L725 445L800 338L880 375L920 408L1000 400L1045 375L1080 408L1150 380L1165 450L1192 480L1180 560L1195 650L1210 680L1190 740H1085L1065 690L1085 640L1035 630L1025 600L980 590L965 555L900 548L820 560L755 560L700 572L620 572L520 540Z" />
        </clipPath>
      </defs>
      <path d="M152 142H1075L1120 235L1180 300L1205 240L1270 320L1375 350L1475 380V1284H152Z" fill="#1f3a4d" fillOpacity="0.05" />
      <path d="M1335 925L1440 915V985L1340 990ZM190 870L240 865L260 930L200 940ZM375 870h35v35h-35Z" fill="#1f3a4d" fillOpacity="0.03" />
      <g clipPath="url(#tigray)">
        <path filter="url(#soft)" d="M500 470L525 430L630 435L680 410L725 445L800 338L880 375L920 408L1000 400L1045 375L1080 408L1150 380L1165 450L1192 480L1180 560L1195 650L1210 680L1190 740H1085L1065 690L1085 640L1035 630L1025 600L980 590L965 555L900 548L820 560L755 560L700 572L620 572L520 540Z" stroke="#1f3a4d" strokeOpacity="0.2" strokeWidth="44" />
      </g>
      <g stroke="#1f3a4d" strokeOpacity="0.32" strokeWidth="3">
        <path d="M525 432L630 435L645 415L690 410L725 445L800 338L840 370L880 375L920 410L1000 400L1045 375L1080 408L1095 392L1110 398L1150 380L1225 410L1255 390L1275 410L1410 455L1475 522" />
        <path d="M1150 380L1165 450L1195 480L1180 560L1195 650L1210 680L1190 740H1085L1065 690L1085 640L1035 630L1025 600L980 590L965 555L900 548L820 560L755 560L700 575L620 572L520 540L500 470" strokeOpacity="0.14" />
        <path d="M588 145L550 205L540 250L497 295L512 420M505 520L455 580L440 678L350 685L320 730L260 798L215 825L195 910L190 965L155 995" strokeOpacity="0.24" />
        <path d="M1075 145L1110 200L1125 235L1155 240L1180 300L1200 295V245L1235 260L1265 320L1330 325L1380 345L1395 368L1475 378M1235 150L1250 160M1222 180C1250 200 1270 200 1255 215C1240 225 1215 225 1220 190M1262 210L1320 225L1260 228M1280 290L1290 300" strokeOpacity="0.15" />
        <path d="M345 502C430 525 540 520 600 487M962 605C1010 570 1050 560 1085 556M1278 530C1260 550 1235 560 1205 563M890 550L858 606M1175 420L1230 410" strokeOpacity="0.3" />
        <path d="M973 820C970 770 980 730 1000 705M1303 820C1305 770 1290 730 1265 705" strokeOpacity="0.45" strokeWidth="5" />
        <path d="M172 1269H268" strokeOpacity="0.45" strokeWidth="4" />
      </g>
      <g fill="#1f3a4d" fillOpacity="0.45">
        <path d="M1017 687L984 706L1010 720ZM1246 688L1270 718L1282 705ZM345 502l22-6v12ZM1092 555l-22-6v12ZM1200 563l22-6v10ZM298 1257l8 17h-16Z" />
        {towns.map(([x, y], i) => (
          <ellipse key={i} cx={x} cy={y} rx="13" ry="9" fillOpacity={i > 4 ? 0.28 : 0.38} />
        ))}
        <ellipse cx="607" cy="545" rx="16" ry="12" />
        <rect x="976" y="1250" width="18" height="16" />
        <ellipse cx="187" cy="1324" rx="15" ry="10" />
        <ellipse cx="672" cy="1324" rx="14" ry="9" fillOpacity="0.35" />
        <ellipse cx="748" cy="1381" rx="14" ry="11" />
        <path d="M878 1340V1325L897 1311L916 1325V1340H906V1330H888V1340ZM521 438l11-9 11 9h-5v-4h-12v4ZM752 457l11-12 11 12h-5v-4h-12v4ZM835 550l11-12 11 12h-5v-4h-12v4Z" />
      </g>
      <ellipse cx="748" cy="1381" rx="21" ry="16" stroke="#1f3a4d" strokeOpacity="0.35" strokeWidth="3" />
      {notes.map(([x, y], i) => (
        <g key={i}>
          <rect x={x - 22} y={y - 17} width="44" height="34" rx="5" fill="#1f3a4d" fillOpacity="0.32" />
          <rect x={x - 11} y={y - 11} width="22" height="22" fill="#50849d" fillOpacity="0.6" />
          <path d={`M${x} ${y - 7}v14`} stroke="#1f3a4d" strokeOpacity="0.5" strokeWidth="7" />
        </g>
      ))}
      <path d="M648 604H850V684H648ZM900 825H1380V882H900Z" fill="#5187a0" />
      <ellipse cx="352" cy="1080" rx="108" ry="85" fill="#1f3a4d" fillOpacity="0.03" stroke="#1f3a4d" strokeOpacity="0.04" strokeWidth="3" />
      <path d="M255 1060L290 1020L380 1035L420 1080L370 1110L345 1155L310 1125L300 1090Z" fill="#50849d" fillOpacity="0.7" />
      <ellipse cx="355" cy="1080" rx="6" ry="5" fill="#1f3a4d" fillOpacity="0.45" />
      <T x={575} y={299} w={208} s={31} o={0.36}>E R I T R E A</T>
      <T x={218} y={411} w={168} s={31} o={0.17}>S U D A N</T>
      <T x={750} y={1079} w={203} s={31} o={0.28}>E T I O P I A</T>
      <T x={887} y={272} w={102} s={20} o={0.32}>Asmara</T>
      <T x={481} y={416} w={104} s={20} o={0.32}>Humera</T>
      <T x={683} y={408} w={120} s={20} o={0.28}>Shimelba</T>
      <T x={852} y={464} w={90} s={20} o={0.32}>Aksum</T>
      <T x={1030} y={460} w={75} s={20} o={0.32}>Adwa</T>
      <T x={1148} y={442} w={95} s={20} o={0.32}>Adigrat</T>
      <T x={1243} y={516} w={105} s={20} o={0.32}>Aragure</T>
      <T x={683} y={551} w={150} s={20} o={0.32}>Adi Harush</T>
      <T x={884} y={644} w={100} s={20} o={0.32}>Makallè</T>
      <T x={688} y={639} w={122} s={20} b o={0.36}>REGIONE</T>
      <T x={669} y={664} w={155} s={20} b o={0.36}>DEL TIGRAI</T>
      <T x={570} y={703} w={97} s={20} o={0.32}>Gondar</T>
      <T x={548} y={861} w={110} s={20} o={0.32}>Bahirdar</T>
      <T x={1113} y={694} w={120} s={20} o={0.32}>Chercher</T>
      <T x={1085} y={764} w={110} s={20} o={0.32}>Alamata</T>
      <T x={917} y={861} w={445} s={22} o={0.3}>OFFENSIVA DELLE FORZE ETIOPI</T>
      <T x={902} y={1244} w={167} s={22} o={0.4}>Addis Abeba</T>
      <T x={289} y={1246} w={18} s={18}>N</T>
      <T x={186} y={1262} w={56} s={14} o={0.25}>50 km</T>
      <T x={1150} y={1281} w={322} s={16} o={0.2}>© OpenStreetMap contributors</T>
      <T x={233} y={1330} w={373} s={19} o={0.36}>Obiettivo colpito dal lancio di razzi</T>
      <T x={720} y={1330} w={110} s={19} o={0.36}>Raid aerei</T>
      <T x={945} y={1330} w={250} s={19} o={0.36}>Campi profughi eritrei</T>
      <T x={233} y={1386} w={447} s={19} o={0.36}>Note (passa con il mouse per i dettagli)</T>
      <T x={791} y={1386} w={423} s={19} o={0.36}>Città sotto il controllo di Addis Abeba</T>
      <T x={152} y={1475} w={665} s={17} o={0.24}>Mappa: Alberto Bellotto / Inside Over – – Creato con Datawrapper</T>
    </svg>
  );
}

function FlightChart() {
  const legend: [number, number, string][] = [[160, 93, "Europa"], [315, 172, "Nordamerika"], [543, 155, "Südamerika"], [757, 74, "Asien"], [888, 118, "Ozeanien"], [1060, 80, "Afrika"]];
  return (
    <svg viewBox="0 790 1568 370" preserveAspectRatio="none" className="mt-[2px] h-[206.2px] w-[562px] shrink-0" fontFamily="Inter" fill="none">
      {legend.map(([x, w, t]) => (
        <g key={t}>
          <path d={`M${x} 815h30`} stroke="#1f3a4d" strokeOpacity="0.3" strokeWidth="3" />
          <T x={x + 41} y={822} w={w} s={19} o={0.34}>{t}</T>
        </g>
      ))}
      {["100%", "80%", "60%", "40%", "20%", "0%"].map((t, i) => (
        <g key={t}>
          <T x={t.length === 4 ? 164 : t.length === 3 ? 174 : 190} y={853 + i * 56} w={t.length * 14} s={16} o={0.18}>{t}</T>
          <path d={`M235 ${848 + i * 56}H1533`} stroke="#1f3a4d" strokeOpacity="0.05" strokeWidth="2" />
        </g>
      ))}
      <path d="M398 850V1128M565 850V1128M743 850V1128M917 850V1128M1100 850V1128M1272 850V1128M1440 850V1128" stroke="#1f3a4d" strokeOpacity="0.07" strokeWidth="2" />
      <path d="M235 1129H1533" stroke="#1f3a4d" strokeOpacity="0.38" strokeWidth="3" />
      <g stroke="#1f3a4d" strokeOpacity="0.26" strokeWidth="2.8">
        <path d="M250 858L290 865L370 862L410 915L445 932L490 944L530 937L572 934L610 948L660 972L695 1022L740 1047L780 1055L860 1057L900 1052H945L980 1038L1020 1028H1062L1105 1012L1150 1007L1230 1006L1305 1000L1345 988L1400 980L1470 977L1510 971" strokeOpacity="0.45" />
        <path d="M250 860L330 850L370 868L410 860L490 853L530 850L570 858L615 875L655 920L700 1050L740 1098L830 1098L945 1094L1015 1086L1100 1085L1140 1075L1272 1073L1345 1062L1390 1044L1430 1038L1470 1044L1510 1038" strokeOpacity="0.38" />
        <path d="M250 875L292 891L332 874L375 883L412 857L450 886L488 855L520 850L600 850L625 850L662 882L700 965L740 1000L775 1017L830 1020L905 1012L940 1017L1015 1004H1062L1105 974L1145 975L1188 950L1230 954L1272 947L1305 938L1348 920L1390 930L1440 935L1470 933L1510 922" />
        <path d="M250 865L292 877L332 850L375 870L450 855L500 850L575 860L612 885L660 970L700 1040L740 1068L820 1082L900 1074L945 1075L1000 1050L1065 1040L1105 1022L1145 1036L1185 1025L1220 995L1270 1000L1305 965L1345 963L1390 946L1430 955L1510 918" />
        <path d="M490 855L532 900L572 864L600 870L650 950L700 1045L740 1098M940 1030L1000 1000L1062 988M1105 985L1300 965L1380 960M1160 1080L1270 1075L1345 1074L1395 1065L1430 1067L1475 1055H1510" strokeOpacity="0.14" />
      </g>
      <T x={368} y={1149} w={60} s={17} o={0.25}>2020</T>
      <T x={538} y={1149} w={56} s={17} o={0.25}>März</T>
      <T x={724} y={1149} w={38} s={17} o={0.25}>Apr</T>
      <T x={898} y={1149} w={40} s={17} o={0.25}>Mai</T>
      <T x={1078} y={1149} w={46} s={17} o={0.25}>Juni</T>
      <T x={1255} y={1149} w={36} s={17} o={0.25}>Juli</T>
      <T x={1427} y={1149} w={48} s={17} o={0.25}>Aug</T>
    </svg>
  );
}

function RightColumn() {
  return (
    <div className="flex h-full w-[562px] shrink-0 flex-col pt-10 text-[#1f3a4d]/50">
      <Lines className="ml-[54.5px] font-['Inter',sans-serif] text-[16px] leading-5 font-bold text-[#1f3a4d]/60" rows={[[298, "La guerra civile che insanguina l'Etiopia"]]} />
      <EthiopiaMap />
      <div className="mt-4 ml-[57.5px] h-[12.6px] shrink-0 overflow-hidden font-['DejaVu_Serif',serif] text-[16px] leading-[21.8px]">
        <Lines className="-mt-[9.5px]" rows={[[468, "mittlerweile aufgelöst. Doch auch vor Corona hat sich die Branche im"]]} />
      </div>
      <Lines
        className="ml-[57.5px] font-['DejaVu_Serif',serif] text-[16px] leading-[21.82px]"
        rows={[
          [474, "Umbruch und Krisenmodus befunden. Wohin mit den Flugzeugen, die"],
          [463.5, "wie die übergroßen A380 der Lufthansa, keine Zukunft mehr haben?"],
          [426, "Auch andere Flugzeugtypen müssen für längere Zeit Stellplätze"],
          [488.5, "bekommen, idealerweise mit wenig Wind und trockenem Klima, um die"],
          [431.5, "Korrosionsgefahr zu minimieren. In Europa ist der größte dieser"],
          [437.6, "Parkplätze im ostspanischen Teruel. Asiatische Fluglinien parken"],
          [457.7, "vermehrt ihre Maschinen auf den roten Sandpisten in Alice Springs,"],
          [73.5, "Australien."],
        ]}
      />
      <Lines
        className="mt-[9.4px] ml-[57.5px] font-['DejaVu_Serif',serif] text-[16px] leading-[21.87px]"
        rows={[
          [470, "Seit die ersten Corona-Vorschriften gelockert wurden, nimmt die Zahl"],
          [483, "der Flugzeuge am Himmel wieder zu, obschon laut Flightradar24 selbst"],
          [473.5, "am 21. Juli – mitten in der Urlaubszeit – weltweit nur 135.000 Flieger"],
          [422, "abhoben, im Vergleich zu etwa 180.000 Flügen an den Januar-"],
          [442, "Dienstagen. Dass die Zahlen aber wieder steigen, ist zumindest in"],
          [461.6, "Deutschland mehrheitlich auf Flüge mit Klein- und Privatflugzeugen"],
          [110, "zurückzuführen."],
        ]}
      />
      <Lines className="mt-[7px] ml-[57.5px] font-['Inter',sans-serif] text-[16px] leading-5 font-bold text-[#1f3a4d]/60" rows={[[338.7, "Der Flugverkehr nimmt langsam wieder zu"]]} />
      <Lines
        className="mt-[7px] ml-[57.5px] font-['Inter',sans-serif] text-[12px] leading-[15px]"
        rows={[
          [490, "Das Niveau vom Januar ist noch lange nicht erreicht. Am langsamsten wächst der Flugverkehr"],
          [491.7, "in Südamerika und Afrika, Nordamerika hat das Niveau vergleichsweise am höchsten gehalten."],
        ]}
      />
      <FlightChart />
      <Lines
        className="mt-[9.4px] ml-[57.5px] font-['Inter',sans-serif] text-[12px] leading-[13.5px]"
        rows={[
          [473, "Es wird gezählt, wie viele Flüge vom jeweiligen Kontinent abgehen, diese Zahl wird mit dem Maximum für"],
          [213, "den jeweiligen Kontinent ins Verhältnis gesetzt."],
        ]}
      />
      <Lines className="mt-[15px] ml-[57.5px] font-['Inter',sans-serif] text-[11.5px] leading-[14px]" rows={[[109, "Quelle: flightradar24.com"]]} />
      <Lines
        className="mt-[17px] ml-[57.5px] font-['DejaVu_Serif',serif] text-[16px] leading-[21.75px]"
        rows={[
          [492, "Schlüsselt man die Flüge nach Start-Kontinenten auf, dann erkennt man,"],
          [484, "wie unterschiedlich sich Corona und der Umgang damit auswirken. Der"],
          [451, <>erste Einbruch zeigt sich in Asien. Anfang des Jahres <span className="underline decoration-[#1f3a4d]/25 underline-offset-4">hatte sich das</span></>],
          [454.5, <><span className="underline decoration-[#1f3a4d]/25 underline-offset-4">Coronavirus in China verbreitet</span>. Die anderen Kontinente folgten im</>],
          [467, "März. Seit Mai nimmt die Zahl der Flüge weltweit wieder zu – je nach"],
          [266, "Kontinent aber unterschiedlich schnell."],
        ]}
      />
    </div>
  );
}

function Backdrop() {
  return (
    <div aria-hidden className="absolute inset-0 flex overflow-hidden blur-[0.8px]">
      <div className="absolute top-[29px] left-[6px] h-px w-[2856px] bg-[#1f3a4d]/12" />
      <LeftColumn />
      <div className="flex h-full w-[1720px] shrink-0 flex-col">
        <div className="flex h-[1220px] shrink-0">
          <Philadelphia />
          <Region />
          <Universities />
        </div>
        <div className="flex h-[354px]">
          <Donuts />
          <Storm />
          <Masks />
        </div>
      </div>
      <RightColumn />
    </div>
  );
}

/* ---------- sign-in card ---------- */

const UserIcon = () => (
  <svg viewBox="0 0 1280 1792" className="h-[26px] w-[18.6px]" fill="#333">
    <path d="M1280 1399q0 109-62.5 187t-150.5 78h-854q-88 0-150.5-78t-62.5-187q0-85 8.5-160.5t31.5-152 58.5-131 94-89 134.5-34.5q131 128 313 128t313-128q76 0 134.5 34.5t94 89 58.5 131 31.5 152 8.5 160.5zm-256-887q0 159-112.5 271.5t-271.5 112.5-271.5-112.5-112.5-271.5 112.5-271.5 271.5-112.5 271.5 112.5 112.5 271.5z" />
  </svg>
);

const KeyIcon = () => (
  <svg viewBox="0 0 1792 1792" className="size-[26px]" fill="#333">
    <path d="M832 512q0-80-56-136t-136-56-136 56-56 136q0 42 19 83-41-19-83-19-80 0-136 56t-56 136 56 136 136 56 136-56 56-136q0-42-19-83 41 19 83 19 80 0 136-56t56-136zm851 704q0 17-49 66t-66 49q-9 0-28.5-16t-36.5-33-38.5-40-24.5-26l-96 96 220 220q28 28 28 68 0 42-39 81t-81 39q-40 0-68-28l-671-671q-176 131-365 131-163 0-265.5-102.5t-102.5-265.5q0-160 95-313t248-248 313-95q163 0 265.5 102.5t102.5 265.5q0 189-131 365l355 355 96-96q-3-3-26-24.5t-40-38.5-33-36.5-16-28.5q0-17 49-66t66-49q13 0 23 10 6 6 46 44.5t82 79.5 86.5 86 73 78 28.5 41z" />
  </svg>
);

function Field({ icon, type, wide }: { icon: ReactNode; type: string; wide?: boolean }) {
  return (
    <div className="flex h-[66px] overflow-hidden rounded-lg border-2 border-[#dedede] bg-white">
      <span className={wide ? "flex w-[100px] items-center border-r-2 border-[#dedede] bg-[#f1f1f1] pl-9" : "flex w-[93px] items-center border-r-2 border-[#dedede] bg-[#f1f1f1] pl-9"}>
        {icon}
      </span>
      <input type={type} className="min-w-0 flex-1 bg-transparent px-4 outline-none" />
    </div>
  );
}

export default function App() {
  return (
    <div className="relative flex h-[1574px] w-[2872px] overflow-hidden bg-[#50849d]">
      <Backdrop />
      <main className="relative mt-[344px] ml-[550px] flex h-[886px] w-[1768px] bg-white font-['Inter',sans-serif] text-[26px] text-[#333]">
        <aside className="w-[589px] shrink-0 bg-[#f9f9f9] pt-[69px] pl-[73px]">
          <svg viewBox="144 219 124 210" preserveAspectRatio="none" className="h-[70px] w-[71px]" fill="#367bab">
            <path d="M200 219H268V330C268 388 245 429 215 429H144L170 379H212C228 379 241 360 241 330V265H206C189 265 178 281 178 301H224L198 348H145V310C145 255 166 219 200 219Z" />
          </svg>
        </aside>
        <section className="flex-1 pr-10 pl-10">
          <form className="h-[623px] rounded-b-lg px-[30px] pt-[60px] shadow-[0_2px_3px_rgba(0,0,0,0.06)]">
            <h1 className="text-[54px] leading-[66px] -tracking-[0.2px] text-[#1a1f36]">Sign In</h1>
            <p className="mt-[84px] leading-9 -tracking-[0.03px] text-[#777]">Enter your login and password below:</p>
            <label className="mt-5 block text-[24px] leading-9 -tracking-[0.15px] text-[#8a9499]">USERNAME:</label>
            <div className="mt-[10px]">
              <Field icon={<UserIcon />} type="text" />
            </div>
            <label className="mt-px block text-[24px] leading-9 -tracking-[0.3px] text-[#8a9499]">PASSWORD:</label>
            <div className="mt-2">
              <Field icon={<KeyIcon />} type="password" wide />
            </div>
            <button type="button" className="mt-[37px] block h-[66px] w-full rounded-lg bg-[#eee] pb-[2px] text-[#3f81a3]">
              SIGN IN
            </button>
          </form>
          <div className="mt-[85px] ml-[10px]">
            <h2 className="text-[32px] leading-[46px] -tracking-[0.03px] [-webkit-text-stroke:0.8px_#333]">Don't have an account yet?</h2>
            <p className="mt-[18px] leading-9 tracking-[0.04px]">
              <a className="text-[#3f81a3] [-webkit-text-stroke:0.8px_#3f81a3]">Create a new account</a> or <a className="text-[#3f81a3]">try out Spotrix</a> without signing up.
            </p>
          </div>
        </section>
      </main>
    </div>
  );
}
